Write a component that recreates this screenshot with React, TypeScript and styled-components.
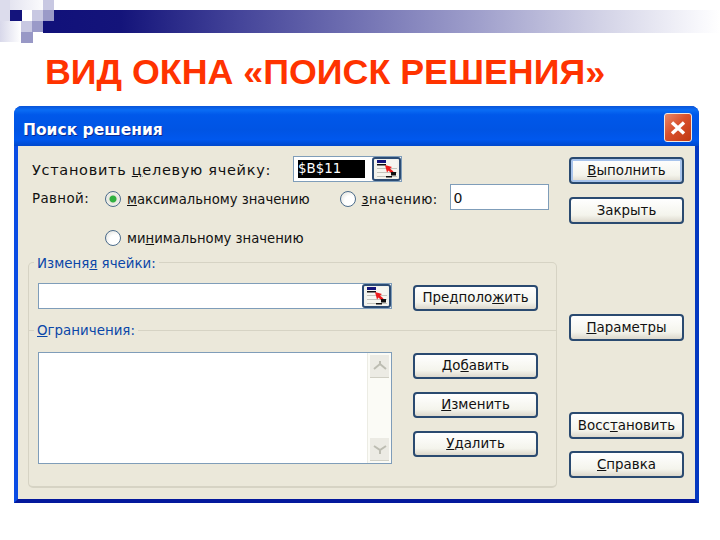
import React from 'react'
import styled, { createGlobalStyle } from 'styled-components'

//=> Global
const Global = createGlobalStyle`
	html, body {
		margin: 0;
		padding: 0;
		background: #fff;
	}
	body {
		font-family: 'DejaVu Sans', 'Noto Sans', sans-serif;
	}
`

//=> Icons
const Squares = () => (
	<svg width='54' height='44' viewBox='0 0 54 44' style={{ display: 'block', flex: 'none' }}>
		<defs>
			<linearGradient id='lav' x1='0' x2='1' y1='0' y2='0'>
				<stop offset='0' stopColor='#d8d8ea' />
				<stop offset='1' stopColor='#ffffff' />
			</linearGradient>
			<linearGradient id='lavTop' x1='0' x2='1' y1='0' y2='0'>
				<stop offset='0' stopColor='#e4e4f0' />
				<stop offset='1' stopColor='#fbfbfd' />
			</linearGradient>
		</defs>
		<rect x='0' y='0' width='10' height='21' fill='#dcdcec' />
		<rect x='0' y='21' width='21' height='21' fill='url(#lav)' />
		<rect x='10' y='0' width='33' height='10' fill='url(#lavTop)' />
		<rect x='43' y='0' width='11' height='10' fill='#c8c8e2' />
		<rect x='10' y='10' width='12' height='11' fill='#14147c' />
		<rect x='22' y='10' width='10' height='11' fill='#fff' />
		<rect x='32' y='10' width='11' height='11' fill='#c8c8e2' />
		<rect x='43' y='10' width='11' height='11' fill='#9a9ac8' />
		<rect x='21' y='21' width='11' height='11' fill='#c8c8e2' />
		<rect x='32' y='21' width='11' height='11' fill='#9a9ac8' />
		<rect x='43' y='21' width='11' height='12' fill='#11117a' />
		<rect x='21' y='32' width='12' height='11' fill='#9898c6' />
	</svg>
)

const RefEdit = () => (
	<svg width='22' height='20' viewBox='0 0 22 20'>
		<rect x='1' y='1' width='20' height='18' fill='#f6f6f0' />
		<rect x='1' y='1' width='9' height='3' fill='#14147a' />
		<rect x='1' y='5' width='9' height='1.5' fill='#111' />
		<path d='M1 9.5H21M1 13.5H21M1 17.5H21' stroke='#c4c4bc' />
		<path d='M9 6l7 2-2 1.5 3.5 3-2 2-3-3-1.5 2z' fill='#ee1c1c' />
		<rect x='15' y='13' width='5' height='3.5' fill='#111' />
		<rect x='10' y='17' width='6' height='1.5' fill='#111' />
	</svg>
)

const CloseGlyph = () => (
	<svg width='16' height='14' viewBox='0 0 16 14'>
		<path d='M2 1.5l12 11M14 1.5l-12 11' stroke='#fff' strokeWidth='3.4' />
	</svg>
)

const ArrowGlyph = ({ down }: { down?: boolean }) => (
	<svg width='14' height='10' viewBox='0 0 14 10'>
		<path
			d={down ? 'M1 2l6 4 6-4M7 5v5' : 'M1 8l6-5 6 5M7 0v4'}
			fill='none'
			stroke='#bdbdb2'
			strokeWidth='2'
		/>
	</svg>
)

//=> DOM
export default function App() {
	return (
		<>
			<Global />
			<Slide>
				<Banner>
					<Squares />
					<BannerBar />
				</Banner>
				<Title>ВИД ОКНА «ПОИСК РЕШЕНИЯ»</Title>
				<Dialog>
					<TitleBar>
						<Caption>Поиск решения</Caption>
						<CloseButton>
							<CloseGlyph />
						</CloseButton>
					</TitleBar>
					<Client>
						<Main>
							<TargetRow>
								<Label>
									Установить <u>ц</u>елевую ячейку:
								</Label>
								<TargetField>
									<Selected>$B$11</Selected>
									<RefButton>
										<RefEdit />
									</RefButton>
								</TargetField>
							</TargetRow>
							<EqualRow>
								<EqualLabel>Равной:</EqualLabel>
								<Radio $checked />
								<RadioText>
									<u>м</u>аксимальному значению
								</RadioText>
								<ValueRadio />
								<ValueText>
									<u>з</u>начению:
								</ValueText>
								<ValueInput>0</ValueInput>
							</EqualRow>
							<MinRow>
								<Radio />
								<RadioText>
									ми<u>н</u>имальному значению
								</RadioText>
							</MinRow>
							<GroupBox>
								<GroupCaption>
									Изменя<u>я</u> ячейки:
								</GroupCaption>
								<ChangeRow>
									<ChangeField>
										<RefButton>
											<RefEdit />
										</RefButton>
									</ChangeField>
									<GuessButton>
										Предполо<u>ж</u>ить
									</GuessButton>
								</ChangeRow>
								<Divider>
									<GroupCaption>
										<u>О</u>граничения:
									</GroupCaption>
								</Divider>
								<LimitRow>
									<ListBox>
										<ScrollTrack>
											<ScrollArrow>
												<ArrowGlyph />
											</ScrollArrow>
											<ScrollArrow>
												<ArrowGlyph down />
											</ScrollArrow>
										</ScrollTrack>
									</ListBox>
									<LimitButtons>
										<SideButton>
											До<u>б</u>авить
										</SideButton>
										<SideButton>
											<u>И</u>зменить
										</SideButton>
										<SideButton>
											<u>У</u>далить
										</SideButton>
									</LimitButtons>
								</LimitRow>
							</GroupBox>
						</Main>
						<Actions>
							<ActionButton $primary>
								<u>В</u>ыполнить
							</ActionButton>
							<ActionButton $gap={13}>Закрыть</ActionButton>
							<ActionButton $gap={90}>
								<u>П</u>араметры
							</ActionButton>
							<ActionButton $gap={71}>
								Восс<u>т</u>ановить
							</ActionButton>
							<ActionButton $gap={12}>
								<u>С</u>правка
							</ActionButton>
						</Actions>
					</Client>
				</Dialog>
			</Slide>
		</>
	)
}

//=> Style
const Slide = styled.div`
	width: 720px;
	height: 540px;
	overflow: hidden;
	display: flex;
	flex-direction: column;
`

const Banner = styled.div`
	display: flex;
	height: 44px;
`

const BannerBar = styled.div`
	flex: 1;
	height: 23px;
	margin-top: 10px;
	background: linear-gradient(90deg, #11117a 0%, #14147a 10%, #45459a 28%, #a0a0cc 64%, #d2d2e6 82%, #f8f8fc 97%, #fff 100%);
`

const Title = styled.h1`
	margin: 8px 0 0 45px;
	height: 54px;
	font: bold 35.8px/40px 'Liberation Sans', Arial, sans-serif;
	color: #ff3300;
	white-space: nowrap;
`

const Dialog = styled.div`
	width: 685px;
	height: 397px;
	margin-left: 14px;
	display: flex;
	flex-direction: column;
	border-radius: 8px 8px 0 0;
	background: #0a4fe0;
	border: solid #0a4ce4;
	border-width: 0 4px 4px;
	border-bottom-color: #04189c;
	border-right-color: #0438c0;
	box-sizing: border-box;
`

const TitleBar = styled.div`
	height: 40px;
	flex: none;
	margin: 0 -4px;
	padding: 0 7px 0 9px;
	display: flex;
	align-items: center;
	justify-content: space-between;
	border-radius: 8px 8px 0 0;
	background: linear-gradient(180deg, #0a54d8 0%, #0a6cf4 10%, #0058ea 22%, #0054e4 60%, #0058ee 84%, #0048cc 100%);
`

const Caption = styled.span`
	margin-top: 7px;
	font: bold 15.5px 'DejaVu Sans', sans-serif;
	color: #fff;
	text-shadow: 1px 1px 0 #0a2a90;
`

const CloseButton = styled.div`
	width: 28px;
	height: 29px;
	margin-top: 3px;
	box-sizing: border-box;
	display: flex;
	align-items: center;
	justify-content: center;
	border: 1px solid #f0e8e0;
	border-radius: 3px;
	background: linear-gradient(135deg, #e8886a 0%, #d8502c 45%, #c03810 100%);
`

const Client = styled.div`
	flex: 1;
	display: flex;
	padding: 9px 0 0 10px;
	background: #ebe8da;
	box-sizing: border-box;
	color: #111;
	font-size: 13.4px;
	line-height: 16px;
`

const Main = styled.div`
	width: 529px;
	display: flex;
	flex-direction: column;
`

const Actions = styled.div`
	margin-left: 12px;
	padding-top: 2px;
	display: flex;
	flex-direction: column;
`

const TargetRow = styled.div`
	height: 27px;
	display: flex;
	align-items: center;
	padding-left: 4px;
`

const Label = styled.span`
	width: 261px;
	margin-top: 2px;
	white-space: nowrap;
	font-size: 14.5px;
	letter-spacing: 0.7px;
`

const TargetField = styled.div`
	width: 109px;
	height: 26px;
	box-sizing: border-box;
	display: flex;
	align-items: center;
	justify-content: space-between;
	padding-left: 4px;
	background: #fff;
	border: 1px solid #7f9db9;
`

const Selected = styled.span`
	width: 67px;
	height: 18px;
	line-height: 18px;
	background: #000;
	color: #fff;
`

const RefButton = styled.div`
	width: 29px;
	height: 24px;
	flex: none;
	box-sizing: border-box;
	display: flex;
	align-items: center;
	justify-content: center;
	border: 2px solid #2c4c74;
	border-radius: 3px;
	background: #f2f2ec;
`

const EqualRow = styled.div`
	height: 30px;
	margin-top: 2px;
	display: flex;
	align-items: center;
	padding-left: 4px;
`

const EqualLabel = styled.span`
	width: 73px;
	letter-spacing: 0.4px;
`

const Radio = styled.span<{ $checked?: boolean }>`
	width: 16px;
	height: 16px;
	flex: none;
	box-sizing: border-box;
	margin-right: 6px;
	border-radius: 50%;
	border: 1px solid #4c6c8c;
	background: ${p =>
		p.$checked
			? 'radial-gradient(circle, #30b040 0 3px, #e8e8e0 4px, #f6f6f0 100%)'
			: 'radial-gradient(circle at 65% 65%, #fff 0 40%, #dcdcd4 100%)'};
`

const ValueRadio = styled(Radio)`
	margin-left: 30px;
`

const RadioText = styled.span`
	margin-top: 1px;
	white-space: nowrap;
	font-size: 13.2px;
`

const ValueText = styled(RadioText)`
	letter-spacing: 0.4px;
`

const ValueInput = styled.div`
	width: 99px;
	height: 26px;
	margin: -4px 0 0 12px;
	padding-left: 3px;
	box-sizing: border-box;
	background: #fff;
	border: 1px solid #7f9db9;
	line-height: 26px;
	font-size: 14px;
`

const MinRow = styled.div`
	height: 24px;
	margin-top: 12px;
	display: flex;
	align-items: center;
	padding-left: 77px;
`

const GroupBox = styled.div`
	height: 226px;
	margin-top: 12px;
	box-sizing: border-box;
	border: 1px solid #d6d3c4;
	border-width: 1px 1px 2px;
	border-radius: 5px;
	padding: 0 0 0 9px;
`

const GroupCaption = styled.span`
	display: block;
	width: fit-content;
	color: #0a46a8;
	background: #ebe8da;
	padding: 0 3px;
	margin: -7px 0 0 -4px;
	height: 16px;
`

const ChangeRow = styled.div`
	height: 28px;
	margin-top: 11px;
	display: flex;
	align-items: flex-start;
	justify-content: space-between;
	padding-right: 18px;
`

const ChangeField = styled.div`
	width: 354px;
	height: 26px;
	box-sizing: border-box;
	display: flex;
	justify-content: flex-end;
	align-items: center;
	background: #fff;
	border: 1px solid #7f9db9;
`

const Divider = styled.div`
	display: flow-root;
	height: 1px;
	margin: 19px 0 0 -9px;
	padding-left: 9px;
	background: #d6d3c4;
`

const LimitRow = styled.div`
	margin-top: 21px;
	display: flex;
	justify-content: space-between;
	padding-right: 18px;
`

const ListBox = styled.div`
	width: 354px;
	height: 112px;
	box-sizing: border-box;
	display: flex;
	justify-content: flex-end;
	background: #fff;
	border: 1px solid #7f9db9;
`

const ScrollTrack = styled.div`
	width: 24px;
	padding: 2px;
	box-sizing: border-box;
	display: flex;
	flex-direction: column;
	justify-content: space-between;
	background: #fbfbf6;
	border-left: 1px solid #ececE4;
`

const ScrollArrow = styled.div`
	height: 22px;
	display: flex;
	align-items: center;
	justify-content: center;
	background: #ecebe4;
	border-bottom: 1px solid #d0cfc4;
`

const LimitButtons = styled.div`
	padding-top: 1px;
	display: flex;
	flex-direction: column;
	gap: 13px;
`

const SideButton = styled.div`
	width: 125px;
	height: 26px;
	box-sizing: border-box;
	display: flex;
	align-items: center;
	justify-content: center;
	border: 2px solid #2a4a70;
	border-radius: 4px;
	background: linear-gradient(180deg, #fff 0%, #f4f4ec 70%, #dcd8cc 100%);
	white-space: nowrap;
`

const GuessButton = styled(SideButton)`
	margin-top: 2px;
`

const ActionButton = styled(SideButton)<{ $primary?: boolean; $gap?: number }>`
	width: 115px;
	height: 27px;
	margin-top: ${p => p.$gap ?? 0}px;
	${p => (p.$primary ? 'box-shadow: inset 0 0 0 2px #a8c4ec;' : '')}
`
